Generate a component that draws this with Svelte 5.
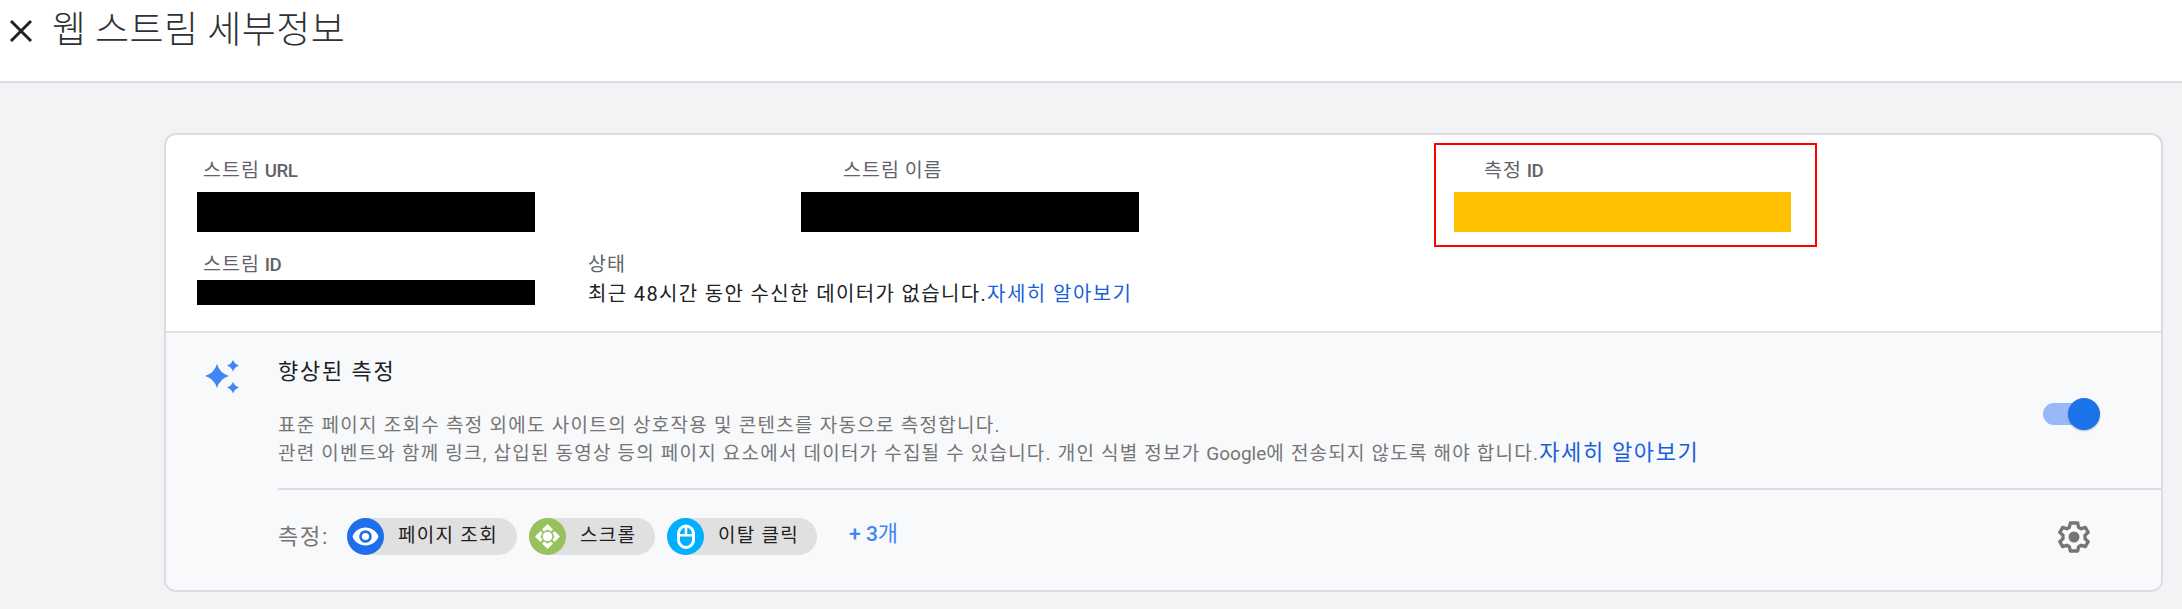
<script>
  const chips = [
    { kind: 'eye', color: '#1f6fea', label: '페이지 조회', width: 170 },
    { kind: 'scroll', color: '#97c15c', label: '스크롤', width: 126 },
    { kind: 'mouse', color: '#00b0ff', label: '이탈 클릭', width: 150 }
  ];
</script>

<div class="page">
  <header>
    <svg class="close" viewBox="0 0 24 24" width="24" height="24"><path d="M2 2 22 22M22 2 2 22" /></svg>
    <h1>웹 스트림 세부정보</h1>
  </header>

  <main>
    <section class="card">
      <div class="details">
        <div class="row first">
          <div class="field url">
            <div class="label">스트림 <span class="la">URL</span></div>
            <div class="bar"></div>
          </div>
          <div class="field name">
            <div class="label">스트림 이름</div>
            <div class="bar"></div>
          </div>
          <div class="field measure">
            <div class="label">측정 <span class="la">ID</span></div>
            <div class="bar"></div>
          </div>
        </div>
        <div class="row second">
          <div class="field sid">
            <div class="label">스트림 <span class="la">ID</span></div>
            <div class="bar"></div>
          </div>
          <div class="status">
            <div class="label">상태</div>
            <div class="state"><span class="msg">최근 48시간 동안 수신한 데이터가 없습니다.</span><a class="more">자세히 알아보기</a></div>
          </div>
        </div>
      </div>

      <div class="enhanced">
        <svg class="spark" viewBox="0 0 34 34" width="34" height="34">
          <path d="M12 4Q14.800 13.200 24 16Q14.800 18.800 12 28Q9.200 18.800 0 16Q9.200 13.200 12 4Z" />
          <path d="M28 0Q29.500 4 34 5.500Q29.500 7 28 11.500Q26.500 7 22 5.500Q26.500 4 28 0Z" />
          <path d="M28 22Q29.500 26 34 27.500Q29.500 29 28 33.500Q26.500 29 22 27.500Q26.500 26 28 22Z" />
        </svg>
        <div class="body">
          <div class="intro">
            <div class="copy">
              <h2>향상된 측정</h2>
              <p class="d1">표준 페이지 조회수 측정 외에도 사이트의 상호작용 및 콘텐츠를 자동으로 측정합니다.</p>
              <p class="d2"><span class="txt">관련 이벤트와 함께 링크, 삽입된 동영상 등의 페이지 요소에서 데이터가 수집될 수 있습니다. 개인 식별 정보가 <span class="brand">Google</span>에 전송되지 않도록 해야 합니다.</span><a>자세히 알아보기</a></p>
            </div>
            <div class="toggle"><span class="thumb"></span></div>
          </div>
          <div class="measures">
            <span class="cap">측정:</span>
            {#each chips as c}
              <div class="chip" style="width: {c.width}px">
                <svg viewBox="0 0 37 37" width="37" height="37">
                  <circle cx="18.500" cy="18.500" r="18.500" fill={c.color} />
                  {#if c.kind === 'eye'}
                    <path fill="#fff" fill-rule="evenodd" d="M18.500 9.500C12.500 9.500 7.500 13 5.500 18.500C7.500 24 12.500 27.500 18.500 27.500S29.500 24 31.500 18.500C29.500 13 24.500 9.500 18.500 9.500ZM18.500 12.200a6.300 6.300 0 1 1 0 12.600a6.300 6.300 0 0 1 0-12.600Z" />
                    <circle cx="18.500" cy="18.500" r="3.600" fill="#fff" />
                  {:else if c.kind === 'scroll'}
                    <circle cx="18.500" cy="18.500" r="4.800" fill="#fff" />
                    <path fill="#fff" d="M18.500 6 24 11.500 22 13.500 18.500 11.500 15 13.500 13 11.500ZM18.500 31 13 25.500 15 23.500 18.500 25.500 22 23.500 24 25.500ZM6 18.500 11.500 13 13.500 15 11.500 18.500 13.500 22 11.500 24ZM31 18.500 25.500 24 23.500 22 25.500 18.500 23.500 15 25.500 13Z" />
                  {:else}
                    <rect x="11.500" y="8" width="15" height="21.500" rx="7.500" fill="none" stroke="#fff" stroke-width="3" />
                    <path d="M11.500 17.300H26.500M19 8V17.300" stroke="#fff" stroke-width="2.500" />
                  {/if}
                </svg>
                <span>{c.label}</span>
              </div>
            {/each}
            <a class="plus"><span class="la">+ 3</span>개</a>
            <svg class="gear" viewBox="0 0 32 32" width="32" height="32">
              <path d="M12.300 2H19.700L20.600 6.300L23.200 7.800L27.300 6.400L30.200 11.400L27 14.300V17.700L30.200 20.600L27.300 25.600L23.200 24.200L20.600 25.700L19.700 30H12.300L11.400 25.700L8.800 24.200L4.700 25.600L1.800 20.600L5 17.700V14.300L1.800 11.400L4.700 6.400L8.800 7.800L11.400 6.300Z" />
              <circle cx="16" cy="16" r="5.500" />
            </svg>
          </div>
        </div>
      </div>
    </section>
  </main>
</div>

<style>
  :global(body) { background: #f1f3f4; }
  .page {
    width: 2182px; height: 609px; overflow: hidden; background: #f1f3f4;
    font-family: Roboto, 'Noto Sans CJK KR', sans-serif; white-space: nowrap;
  }
  h1, h2, p { margin: 0; font-weight: 400; }
  header { box-sizing: border-box; height: 83px; background: #fff; border-bottom: 2px solid #dadce0; display: flex; padding: 0 0 0 9px; }
  .close { margin-top: 19px; stroke: #202124; stroke-width: 3; fill: none; }
  h1 { margin: 0 0 0 19px; font-family: 'Noto Sans CJK KR', sans-serif; font-size: 37px; line-height: 54px; font-weight: 300; letter-spacing: .45px; color: #303134; }
  main { padding: 50px 19px 0 164px; }
  .card { box-sizing: border-box; height: 459px; border: 2px solid #dadce0; border-radius: 12px; background: #fff; overflow: hidden; }
  .details { height: 196px; box-sizing: content-box; border-bottom: 2px solid #dfe1e5; }
  .row { display: flex; }
  .label { height: 26px; font-size: 19.500px; line-height: 28px; letter-spacing: 1px; word-spacing: -1px; color: #5f6368; }
  .la { font-size: 18.67px; line-height: 1; letter-spacing: -.4px; font-weight: 500; }
  .bar { width: 338px; height: 40px; background: #000; }
  .first { padding: 8px 0 0 31px; height: 104px; }
  .url, .name { padding-top: 14px; height: 90px; box-sizing: border-box; }
  .url { width: 604px; }
  .name { width: 633px; }
  .url .label { padding-left: 6px; }
  .name .label { padding-left: 42px; }
  .first .bar { margin-top: 9px; }
  .measure { box-sizing: border-box; width: 383px; height: 104px; border: 2px solid #f00; padding: 12px 0 0 18px; }
  .measure .label { padding-left: 30px; }
  .measure .bar { background: #ffc000; width: 337px; }
  .second { padding: 4px 0 0 31px; }
  .sid { width: 391px; }
  .sid .label { padding-left: 6px; }
  .sid .bar { height: 25px; margin-top: 3px; }
  .state { font-size: 20px; line-height: 26px; letter-spacing: 1.450px; color: #202124; margin-top: 4px; }
  .msg { letter-spacing: 1.350px; }
  .more { color: #1a5fd8; }
  .enhanced { display: flex; height: 259px; background: #f8f9fb; padding-left: 39px; }
  .spark { margin-top: 27px; fill: #4285f4; }
  .body { flex: 1; margin-left: 39px; }
  .intro { height: 155px; border-bottom: 2px solid #dadce0; display: flex; justify-content: space-between; }
  h2 { margin-top: 25px; font-size: 22px; line-height: 28px; letter-spacing: 1.800px; color: #202124; }
  p { font-size: 19px; line-height: 28px; color: #757575; }
  .d1 { margin-top: 26px; letter-spacing: 1.280px; }
  .txt { letter-spacing: 1.210px; }
  .brand { letter-spacing: 0; }
  .d2 a { font-size: 22px; line-height: 1; letter-spacing: 1.650px; color: #1a5fd8; }
  .toggle { width: 54px; height: 22px; margin: 70px 64px 0 0; border-radius: 11px; background: #98b9f7; display: flex; align-items: center; justify-content: flex-end; }
  .thumb { width: 32px; height: 32px; flex: none; border-radius: 50%; background: #1a73e8; box-shadow: 0 1px 2px #0004; margin-right: -3px; }
  .measures { display: flex; height: 92px; align-items: center; }
  .cap { width: 69px; margin-bottom: 5px; font-size: 22px; letter-spacing: 1.800px; color: #757575; }
  .chip { box-sizing: border-box; display: flex; align-items: center; height: 37px; border-radius: 19px; background: #e0e0e0; margin-right: 12px; color: #212121; font-size: 19px; letter-spacing: 1.300px; }
  .chip svg { flex: none; margin-right: 14px; }
  .chip span { margin-bottom: 5px; }
  .plus { margin: 0 0 4px 20px; font-size: 22px; line-height: 30px; color: #4285f4; }
  .plus .la { font-size: 21px; letter-spacing: 0; }
  .gear { margin: 2px 71px 0 auto; fill: none; stroke: #757575; stroke-width: 3.300; stroke-linejoin: round; }
  .gear circle { fill: #757575; stroke: none; }
</style>
